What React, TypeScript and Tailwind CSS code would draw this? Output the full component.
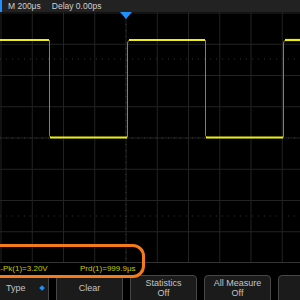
import React from 'react';

const DIV = 31.25;

const ScopeGrid: React.FC = () => {
  const vLines = Array.from({ length: 10 }, (_, i) => 1 + i * DIV);
  const hLines = Array.from({ length: 9 }, (_, i) => 1 + i * DIV);

  // trace levels inside the 251px grid
  const high = 28;
  const low = 125.5;

  return (
    <svg width="300" height="251" viewBox="0 0 300 251" className="block">
      <rect width="300" height="251" fill="#000" />
      {/* grid */}
      {vLines.map((x) => (
        <line key={`v${x}`} x1={x} y1="0" x2={x} y2="251" stroke="#232323" strokeWidth="1" />
      ))}
      {hLines.map((y) => (
        <line key={`h${y}`} x1="0" y1={y} x2="300" y2={y} stroke="#232323" strokeWidth="1" />
      ))}
      <line x1="0" y1="250.5" x2="300" y2="250.5" stroke="#333" strokeWidth="1" />
      {/* center axes with ticks */}
      <line x1="0" y1="126" x2="300" y2="126" stroke="#3a3a3a" strokeWidth="1" strokeDasharray="1 5" />
      <line x1="126" y1="0" x2="126" y2="251" stroke="#3a3a3a" strokeWidth="1" strokeDasharray="1 5" />
      {/* level lines */}
      <line x1="0" y1="47" x2="300" y2="47" stroke="#333" strokeWidth="1" strokeDasharray="1 5" />
      <line x1="0" y1="204" x2="300" y2="204" stroke="#333" strokeWidth="1" strokeDasharray="1 5" />

      {/* edges, thin and dim */}
      <g stroke="#8f8f00" strokeWidth="1" fill="none">
        <path d={`M49.5 ${high} L49.5 ${low - 2} Q50 ${low} 52 ${low}`} />
        <path d={`M127.5 ${low} L127.5 ${high + 3} Q128 ${high} 130 ${high}`} />
        <path d={`M205.5 ${high} L205.5 ${low - 2} Q206 ${low} 208 ${low}`} />
        <path d={`M283.5 ${low} L283.5 ${high + 3} Q284 ${high} 286 ${high}`} />
      </g>
      {/* flat levels, bright */}
      <g stroke="#eeee10" strokeWidth="2.2" fill="none">
        <line x1="0" y1={high} x2="49" y2={high} />
        <line x1="50" y1={low} x2="127" y2={low} />
        <line x1="129" y1={high} x2="205" y2={high} />
        <line x1="206" y1={low} x2="283" y2={low} />
        <line x1="285" y1={high} x2="300" y2={high} />
      </g>
    </svg>
  );
};

const SoftKey: React.FC<{ children: React.ReactNode; className?: string }> = ({ children, className }) => (
  <div
    className={`w-[67px] h-[32px] shrink-0 rounded-[4px] border border-[#474747] bg-[#1b1b1b] flex flex-col items-center pt-[2px] text-[9px] leading-[10px] text-[#c4c4c4] ${className ?? ''}`}
  >
    {children}
  </div>
);

export default function App() {
  return (
    <div
      className="relative w-[300px] h-[300px] overflow-hidden bg-black"
      style={{ fontFamily: '"Liberation Sans", Arial, sans-serif' }}
    >
      {/* Top status bar */}
      <div className="h-[12px] bg-[#222] flex items-center text-[8.5px] leading-none text-[#cfcfcf]">
        <div className="w-[2px] h-full bg-[#1e90ff]" />
        <span className="ml-[6px]">M 200μs</span>
        <span className="ml-[11px]">Delay 0.00ps</span>
      </div>

      {/* Trigger position marker */}
      <div className="absolute left-[120px] top-[12px] w-0 h-0 border-l-[6px] border-r-[6px] border-t-[7px] border-l-transparent border-r-transparent border-t-[#1e8fff]" />

      {/* Waveform area */}
      <ScopeGrid />

      <div className="h-[12px] flex items-center ml-[-9px] text-[8px] leading-none text-[#c9c905]">
        <span className="w-[89px] shrink-0 whitespace-nowrap">Pk-Pk(1)=3.20V</span>
        <span className="whitespace-nowrap">Prd(1)=999.9μs</span>
      </div>

      {/* Soft keys */}
      <div className="flex gap-[7px] ml-[-18px]">
        <SoftKey className="!flex-row !items-center !pt-0 pl-[23px] pb-[6px]">
          <span>Type</span>
          <span className="ml-[14px] w-[4px] h-[4px] rotate-45 bg-[#1e90ff]" />
        </SoftKey>
        <SoftKey className="!justify-center !pt-0 pb-[6px]">Clear</SoftKey>
        <SoftKey>
          <span>Statistics</span>
          <span>Off</span>
        </SoftKey>
        <SoftKey>
          <span>All Measure</span>
          <span>Off</span>
        </SoftKey>
        <SoftKey>
          <span></span>
        </SoftKey>
      </div>

      {/* Orange annotation */}
      <div className="absolute left-[-20px] top-[244px] w-[165px] h-[34px] rounded-[12px] border-[3px] border-[#f47a1c] pointer-events-none" />
    </div>
  );
}
